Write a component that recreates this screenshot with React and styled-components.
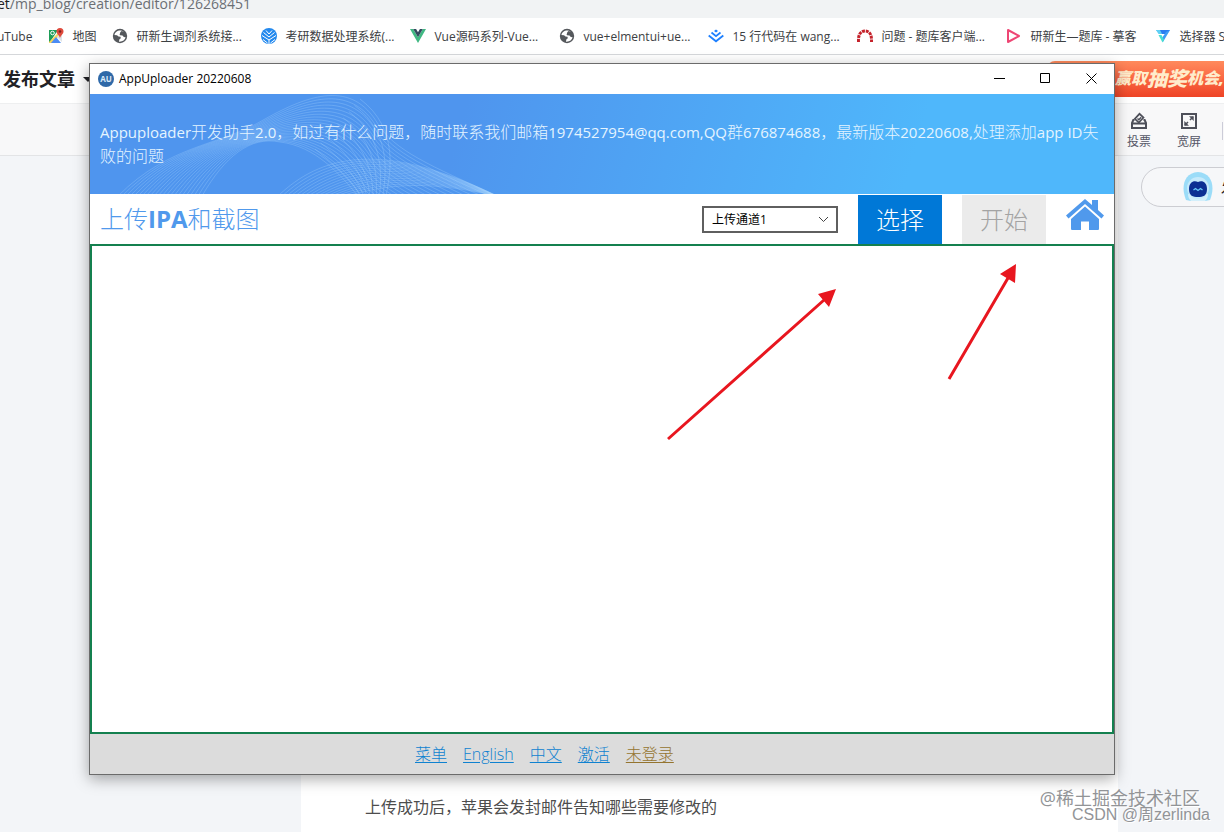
import React from "react";
import styled, { createGlobalStyle } from "styled-components";

const sans = '"Open Sans", "Noto Sans CJK SC", sans-serif';

const GlobalStyle = createGlobalStyle`
  *, *::before, *::after { box-sizing: border-box; }
  body { margin: 0; font-family: ${sans}; font-size: 12px; color: #333; background: #f3f5f8; }
  button, select { font-family: inherit; }
  svg { display: block; flex: none; }
`;

/* ---------- browser page ---------- */

const Page = styled.div`
  position: relative;
  display: flex;
  flex-direction: column;
  min-height: 100vh;
  overflow: hidden;
`;

const AddressBar = styled.div`
  height: 18px;
  display: flex;
  align-items: flex-end;
  padding-bottom: 4px;
  background: #f1f3f4;
  color: #6b6f74;
  font-size: 14px;
  line-height: 20px;
  white-space: nowrap;
  overflow: hidden;
`;

const Host = styled.span`
  margin-left: -3px;
  color: #202124;
`;

const BookmarkBar = styled.nav`
  height: 37px;
  display: flex;
  align-items: center;
  gap: 16px;
  margin-left: -3px;
  background: #fff;
  border-bottom: 1px solid #d5d7da;
  overflow: hidden;
`;

const Bookmark = styled.a`
  display: flex;
  flex: none;
  align-items: center;
  gap: 8px;
  color: #3c4043;
  line-height: 18px;
  text-decoration: none;
  white-space: nowrap;
`;

const BookmarkLabel = styled.span`
  width: ${(p) => (p.$long ? "109px" : "auto")};
  padding-top: 2px;
`;

const Header = styled.header`
  height: 48px;
  display: flex;
  align-items: center;
  gap: 8px;
  padding-left: 3px;
  background: #fff;
`;

const HeaderTitle = styled.h1`
  margin: 0;
  font-size: 18px;
  line-height: 24px;
  font-weight: 700;
  color: #222226;
`;

const Promo = styled.a`
  display: flex;
  align-items: center;
  width: 177px;
  height: 36px;
  margin-left: auto;
  padding: 0 0 4px 68px;
  border-radius: 8px 0 0 0;
  background: linear-gradient(#ff8a5c, #fb6a45 45%, #ee4426);
  color: #ffeccb;
  font-size: 16px;
  font-style: italic;
  font-weight: 900;
  text-decoration: none;
  white-space: nowrap;
  overflow: hidden;
`;

const PromoStrong = styled.strong`
  font-size: 20px;
  font-weight: 900;
`;

const EditorTools = styled.div`
  height: 53px;
  display: flex;
  justify-content: flex-end;
  align-items: center;
  gap: 26px;
  padding-top: 3px;
  background: #f8f8f9;
  border-top: 1px solid #eeeff0;
  border-bottom: 1px solid #e3e4e6;
`;

const Tool = styled.button`
  display: flex;
  flex-direction: column;
  align-items: center;
  gap: 3px;
  padding: 0;
  border: 0;
  background: none;
  color: #555666;
  font-size: 12px;
  line-height: 18px;
`;

const ToolDivider = styled.div`
  width: 2px;
  height: 18px;
  margin-left: -5px;
  border-left: 1px solid #ccccd8;
`;

const Main = styled.main`
  flex: 1;
  display: grid;
  grid-template-columns: 301px 1fr 106px;
`;

const Article = styled.article`
  display: flex;
  align-items: flex-end;
  padding: 0 64px 12px;
  background: #fff;
  color: #4d4d4d;
  font-size: 16px;
  line-height: 26px;
`;

const Paragraph = styled.p`
  margin: 0;
`;

const Aside = styled.aside`
  padding: 11px 0 0 23px;
  overflow: hidden;
`;

const AssistantButton = styled.button`
  display: flex;
  align-items: center;
  gap: 8px;
  width: 140px;
  height: 40px;
  padding: 0 0 0 41px;
  border: 1px solid #cccdd2;
  border-radius: 20px;
  background: #f6f7f9;
  color: #222226;
  font-size: 14px;
  white-space: nowrap;
`;

const Watermarks = styled.div`
  position: absolute;
  right: 14px;
  bottom: 8px;
  display: flex;
  flex-direction: column;
  align-items: flex-end;
  color: #929497;
  text-shadow: 1px 1px 0 #fff;
  pointer-events: none;
`;

const CommunityMark = styled.span`
  margin-right: 10px;
  font-size: 18px;
  line-height: 16px;
`;

const AuthorMark = styled.span`
  font-family: "Liberation Sans", "Noto Sans CJK SC", sans-serif;
  font-size: 16px;
  line-height: 18px;
`;

/* ---------- desktop window ---------- */

const AppWindow = styled.section`
  position: absolute;
  inset: 63px 109px 57px 89px;
  display: flex;
  flex-direction: column;
  border: 1px solid #6b6b6b;
  background: #fff;
  box-shadow: 0 4px 14px rgba(0, 0, 0, 0.34);
`;

const TitleBar = styled.div`
  height: 30px;
  display: flex;
  align-items: center;
  gap: 5px;
  padding-left: 8px;
  color: #000;
`;

const WindowTitle = styled.span`
  flex: 1;
  font-size: 12px;
  line-height: 18px;
`;

const WindowButton = styled.button`
  width: 46px;
  height: 30px;
  margin-left: -5px;
  padding: 0 0 2px;
  display: grid;
  place-items: center;
  border: 0;
  background: none;
`;

const Banner = styled.div`
  position: relative;
  height: 100px;
  padding: 26px 10px;
  background: linear-gradient(106deg, #4f95ee 36%, #4fb7fb 80%);
  overflow: hidden;
`;

const Waves = styled.svg`
  position: absolute;
  left: 0;
  top: 0;
`;

const BannerText = styled.p`
  position: relative;
  margin: 0;
  color: #e4f4ff;
  font-size: 16px;
  font-weight: 300;
  line-height: 24px;
`;

const Latin = styled.span`
  font-size: 15px;
  font-weight: 400;
`;

const ActionBar = styled.div`
  height: 50px;
  display: flex;
  align-items: center;
  padding: 0 10px;
  gap: 20px;
`;

const ActionTitle = styled.h2`
  flex: 1;
  margin: 0;
  color: #5099ec;
  font-size: 24px;
  font-weight: 300;
  line-height: 32px;
  b { font-weight: 700; }
`;

const SelectBox = styled.div`
  position: relative;
  width: 136px;
  svg { position: absolute; right: 9px; top: 10px; pointer-events: none; }
`;

const ChannelSelect = styled.select`
  appearance: none;
  display: block;
  width: 100%;
  height: 27px;
  padding: 0 8px;
  border: 2px solid #5f5f5f;
  border-radius: 0;
  background: #fff;
  color: #000;
  font-size: 12px;
`;

const ActionButton = styled.button`
  align-self: flex-end;
  width: 84px;
  height: 49px;
  padding: 0;
  border: 0;
  background: ${(p) => (p.$primary ? "#0078d7" : "#ebebeb")};
  color: ${(p) => (p.$primary ? "#fff" : "#a3a3a3")};
  font-size: 24px;
  font-weight: 300;
  line-height: 32px;
`;

const HomeLink = styled.a`
  padding-bottom: 9px;
`;

const Workspace = styled.div`
  flex: 1;
  border: 2px solid #14804f;
  background: #fff;
`;

const Footer = styled.footer`
  height: 40px;
  display: flex;
  align-items: center;
  gap: 16px;
  padding-left: 325px;
  background: #dcdcdc;
`;

const FooterLink = styled.a`
  color: ${(p) => (p.$muted ? "#94742f" : "#0f82d0")};
  font-size: 16px;
  font-weight: 300;
  line-height: 24px;
  text-decoration: underline;
  text-underline-offset: 2px;
`;

const Arrows = styled.svg`
  position: absolute;
  left: 660px;
  top: 256px;
  pointer-events: none;
`;

/* ---------- drawings ---------- */

const MapsIcon = () => (
  <svg width="16" height="16" viewBox="0 0 16 16">
    <path d="M1 2h9l-8 12H1z" fill="#1e9d58" />
    <path d="M1 14 11 4l2 2L4 15H1z" fill="#f5d35b" />
    <path d="M3 15 8 9l5 6z" fill="#4b8bf4" />
    <path d="M9 9l5 5V7l-3-1z" fill="#dfe3e6" />
    <circle cx="4.500" cy="5" r="1.800" fill="none" stroke="#fff" />
    <path d="M12 0a3.500 3.500 0 0 0-3.500 3.500C8.500 6 11 7 12 10c1-3 3.500-4 3.500-6.500A3.500 3.500 0 0 0 12 0z" fill="#df4a3c" />
    <circle cx="12" cy="3.500" r="1.300" fill="#7d2020" />
  </svg>
);

const GlobeIcon = () => (
  <svg width="16" height="16" viewBox="0 0 16 16">
    <circle cx="8" cy="8" r="7.200" fill="#55585c" />
    <path d="M7 2.500c-2 .2-4.200 2-4.600 4.500l2.600.2 1.500 1.300 2 .2.300 1.600-1.500 1.200-.3 2.200c3.400.3 6-1.600 6.600-4.400l-1.800-.3-1.300-1.400-2.500-.4-.5-1.200 2-1.200 1.600.3.300-1.600C10.300 2.800 9 2.300 7 2.500z" fill="#fff" />
    <path d="M8 4.500 9.500 3l2.500.8.5 2-2 .8-2.500-.6z" fill="#55585c" />
  </svg>
);

const OrbIcon = () => (
  <svg width="16" height="16" viewBox="0 0 16 16">
    <circle cx="8" cy="8" r="8" fill="#2389ee" />
    <g fill="none" stroke="#fff" strokeWidth="1">
      <path d="M8 16v-4M8 12 1 7.500M8 12l7-4.500M8 9 2.500 4.500M8 9l5.500-4.500M8 6 5 2.500M8 6l3-3.500M6.500 15 2 11.500M9.500 15l4.500-3.500" />
    </g>
  </svg>
);

const VueIcon = () => (
  <svg width="16" height="16" viewBox="0 0 16 16">
    <path d="M0 1h3.200L8 9.300 12.800 1H16L8 15z" fill="#41b883" />
    <path d="M3.200 1h2.900L8 4.300 9.900 1h2.900L8 9.300z" fill="#34495e" />
  </svg>
);

const JuejinIcon = () => (
  <svg width="16" height="16" viewBox="0 0 16 16">
    <path d="M8 1.500 10 3 8 4.600 6 3z" fill="#1e80ff" />
    <path d="m3.500 4.500 4.500 3.700 4.500-3.700M.7 7.500 8 13.300l7.300-5.800" fill="none" stroke="#1e80ff" strokeWidth="1.800" />
  </svg>
);

const ArchIcon = () => (
  <svg width="16" height="16" viewBox="0 0 16 16">
    <path d="M1.500 14C1 6 4 3 8 3s7 3 6.500 11" fill="none" stroke="#c5222b" strokeWidth="3" strokeDasharray="3 .8" />
  </svg>
);

const PlayIcon = () => (
  <svg width="16" height="16" viewBox="0 0 16 16">
    <path d="M2 2v12l11-6z" fill="none" stroke="#ee4674" strokeWidth="2" strokeLinejoin="round" />
  </svg>
);

const TriangleIcon = () => (
  <svg width="16" height="16" viewBox="0 0 16 16">
    <path d="M1 2h14l-3 4H5z" fill="#2b7df0" />
    <path d="M15 2 8 14l-1-4 4-6z" fill="#3f9cf5" />
    <path d="M3.500 7h3L9 12l-1.500 2.500z" fill="#45dfd2" />
    <path d="M1 2h4l2 4H3.500z" fill="#5fd0f5" />
  </svg>
);

const CaretIcon = () => (
  <svg width="10" height="5" viewBox="0 0 10 5"><path d="M0 0h10L5 5z" fill="#222226" /></svg>
);

const VoteIcon = () => (
  <svg width="18" height="18" viewBox="0 0 18 18" fill="none" stroke="#4d4f59" strokeWidth="2">
    <path d="M4.500 8H3.300L2 11v5h14v-5l-1.300-3h-1.200M2 11.500h14" />
    <path d="m4.800 6.800 4.700-5 4 3.800-4.700 5z" strokeWidth="1.700" />
    <path d="m7.500 6.500 1.300 1.300 2.400-2.600" strokeWidth="1.400" />
  </svg>
);

const WideIcon = () => (
  <svg width="18" height="18" viewBox="0 0 18 18" fill="none" stroke="#4d4f59" strokeWidth="2">
    <path d="M2 2h14v14H2z" />
    <path d="m10 8 3-3M8 10l-3 3" strokeWidth="1.500" />
    <path d="M9 4.300h4.700V9zM4.300 9v4.700H9z" fill="#4d4f59" stroke="none" />
  </svg>
);

const RobotIcon = () => (
  <svg width="30" height="30" viewBox="0 0 30 30">
    <path d="M3 28C-2 16 0 1 15 0c15 1 17 16 12 28l-5 1H8z" fill="#9bdcf8" />
    <path d="M8 29c-2-2-3-4-3-7h20c0 3-1 5-3 7z" fill="#d3effb" />
    <circle cx="15" cy="16" r="11" fill="#c6eafb" />
    <path d="M15 10c4-2 9 0 9 7s-4 8-9 8-9-1-9-8 5-9 9-7z" fill="#0c2f93" />
    <path d="m10.500 18 2-1.500 2.500 2 2.500-2 2 1.500" fill="none" stroke="#69c9fa" strokeWidth="1.300" />
  </svg>
);

const AppLogo = () => (
  <svg width="16" height="16" viewBox="0 0 16 16">
    <circle cx="8" cy="8" r="8" fill="#2f69a8" />
    <text x="8" y="11" textAnchor="middle" fontFamily="Open Sans, sans-serif" fontSize="8" fontWeight="700" fill="#dcebfa">AU</text>
  </svg>
);

const HomeIcon = () => (
  <svg width="38" height="32" viewBox="0 0 38 32" fill="#5099ec">
    <path d="M19 0 26 6V1h6v10l6 5.500-2.500 3L19 5 2.500 19.500 0 16.500z" />
    <path d="M19 7.500 33 20v9.500c0 1-.5 1.500-1.500 1.500H23v-8.500h-8V31H6.500C5.500 31 5 30.500 5 29.500V20z" />
  </svg>
);

/* Blends two cubic curves given as flat coordinate lists into a fan of lines. */
const fan = (from, to, count) =>
  Array.from({ length: count }, (_, i) => {
    const t = i / (count - 1);
    const p = from.map((v, k) => (v + (to[k] - v) * t).toFixed(1));
    return `M${p[0]},${p[1]}C${p.slice(2).join(" ")}`;
  });

const waveLines = [
  ...fan(
    [28, 102, 80, 50, 130, 52, 175, 25, 220, 0, 262, -14, 288, 30, 304, 56, 340, 72, 408, 102],
    [112, 102, 135, 62, 160, 42, 190, 48, 225, 52, 250, 80, 268, 102, 275, 110, 290, 120, 300, 130],
    22
  ),
  ...fan(
    [188, 102, 230, 62, 290, 45, 405, 101],
    [250, 104, 290, 92, 330, 84, 405, 102],
    16
  ),
  ...fan(
    [225, 55, 250, 75, 265, 90, 270, 102],
    [270, 5, 310, 35, 300, 80, 296, 102],
    9
  ),
];

const bookmarks = [
  { icon: <MapsIcon />, label: "地图" },
  { icon: <GlobeIcon />, label: "研新生调剂系统接...", long: true },
  { icon: <OrbIcon />, label: "考研数据处理系统(...", long: true },
  { icon: <VueIcon />, label: "Vue源码系列-Vue...", long: true },
  { icon: <GlobeIcon />, label: "vue+elmentui+ue...", long: true },
  { icon: <JuejinIcon />, label: "15 行代码在 wang...", long: true },
  { icon: <ArchIcon />, label: "问题 - 题库客户端...", long: true },
  { icon: <PlayIcon />, label: "研新生—题库 - 摹客", long: true },
  { icon: <TriangleIcon />, label: "选择器 S", long: true },
];

export default function App() {
  return (
    <Page>
      <GlobalStyle />
      <AddressBar>
        <Host>et</Host>
        <span>/mp_blog/creation/editor/126268451</span>
      </AddressBar>
      <BookmarkBar>
        <Bookmark href="#"><BookmarkLabel>uTube</BookmarkLabel></Bookmark>
        {bookmarks.map((b) => (
          <Bookmark href="#" key={b.label}>
            {b.icon}
            <BookmarkLabel $long={b.long}>{b.label}</BookmarkLabel>
          </Bookmark>
        ))}
      </BookmarkBar>
      <Header>
        <HeaderTitle>发布文章</HeaderTitle>
        <CaretIcon />
        <Promo href="#">
          赢取<PromoStrong>抽奖</PromoStrong>机会,
        </Promo>
      </Header>
      <EditorTools>
        <Tool><VoteIcon />投票</Tool>
        <Tool><WideIcon />宽屏</Tool>
        <ToolDivider />
      </EditorTools>
      <Main>
        <div />
        <Article>
          <Paragraph>上传成功后，苹果会发封邮件告知哪些需要修改的</Paragraph>
        </Article>
        <Aside>
          <AssistantButton><RobotIcon />发文助手</AssistantButton>
        </Aside>
      </Main>

      <AppWindow>
        <TitleBar>
          <AppLogo />
          <WindowTitle>AppUploader 20220608</WindowTitle>
          <WindowButton aria-label="Minimize">
            <svg width="11" height="11" viewBox="0 0 11 11"><path d="M0 5.500h11" stroke="#000" /></svg>
          </WindowButton>
          <WindowButton aria-label="Maximize">
            <svg width="11" height="11" viewBox="0 0 11 11"><path d="M.5.5h9v9h-9z" fill="none" stroke="#000" /></svg>
          </WindowButton>
          <WindowButton aria-label="Close">
            <svg width="11" height="11" viewBox="0 0 11 11"><path d="m.5.5 10 10m0-10-10 10" stroke="#000" /></svg>
          </WindowButton>
        </TitleBar>
        <Banner>
          <Waves width="420" height="100" viewBox="0 0 420 100" fill="none" stroke="#b4dbff" strokeOpacity="0.38" strokeWidth="0.700">
            {waveLines.map((d) => <path key={d} d={d} />)}
          </Waves>
          <BannerText>
            <Latin>Appuploader</Latin>开发助手<Latin>2.0</Latin>，如过有什么问题，随时联系我们邮箱
            <Latin>1974527954@qq.com,QQ</Latin>群<Latin>676874688</Latin>，最新版本
            <Latin>20220608,</Latin>处理添加<Latin>app ID</Latin>失败的问题
          </BannerText>
        </Banner>
        <ActionBar>
          <ActionTitle>上传<b>IPA</b>和截图</ActionTitle>
          <SelectBox>
            <ChannelSelect aria-label="上传通道"><option>上传通道1</option></ChannelSelect>
            <svg width="11" height="7" viewBox="0 0 11 7"><path d="m1 1 4.500 4.500L10 1" fill="none" stroke="#444" /></svg>
          </SelectBox>
          <ActionButton $primary>选择</ActionButton>
          <ActionButton disabled>开始</ActionButton>
          <HomeLink href="#" aria-label="Home"><HomeIcon /></HomeLink>
        </ActionBar>
        <Workspace />
        <Footer>
          <FooterLink href="#">菜单</FooterLink>
          <FooterLink href="#">English</FooterLink>
          <FooterLink href="#">中文</FooterLink>
          <FooterLink href="#">激活</FooterLink>
          <FooterLink href="#" $muted>未登录</FooterLink>
        </Footer>
      </AppWindow>

      <Arrows width="370" height="190" viewBox="660 256 370 190" fill="#e8161f" stroke="#e8161f">
        <path d="M668 439 824 300M949 379 1008 278" strokeWidth="3" />
        <path d="m836 289-7 18-11-13zM1016 264l-1 19-15-9z" stroke="none" />
      </Arrows>

      <Watermarks>
        <CommunityMark>@稀土掘金技术社区</CommunityMark>
        <AuthorMark>CSDN @周zerlinda</AuthorMark>
      </Watermarks>
    </Page>
  );
}
